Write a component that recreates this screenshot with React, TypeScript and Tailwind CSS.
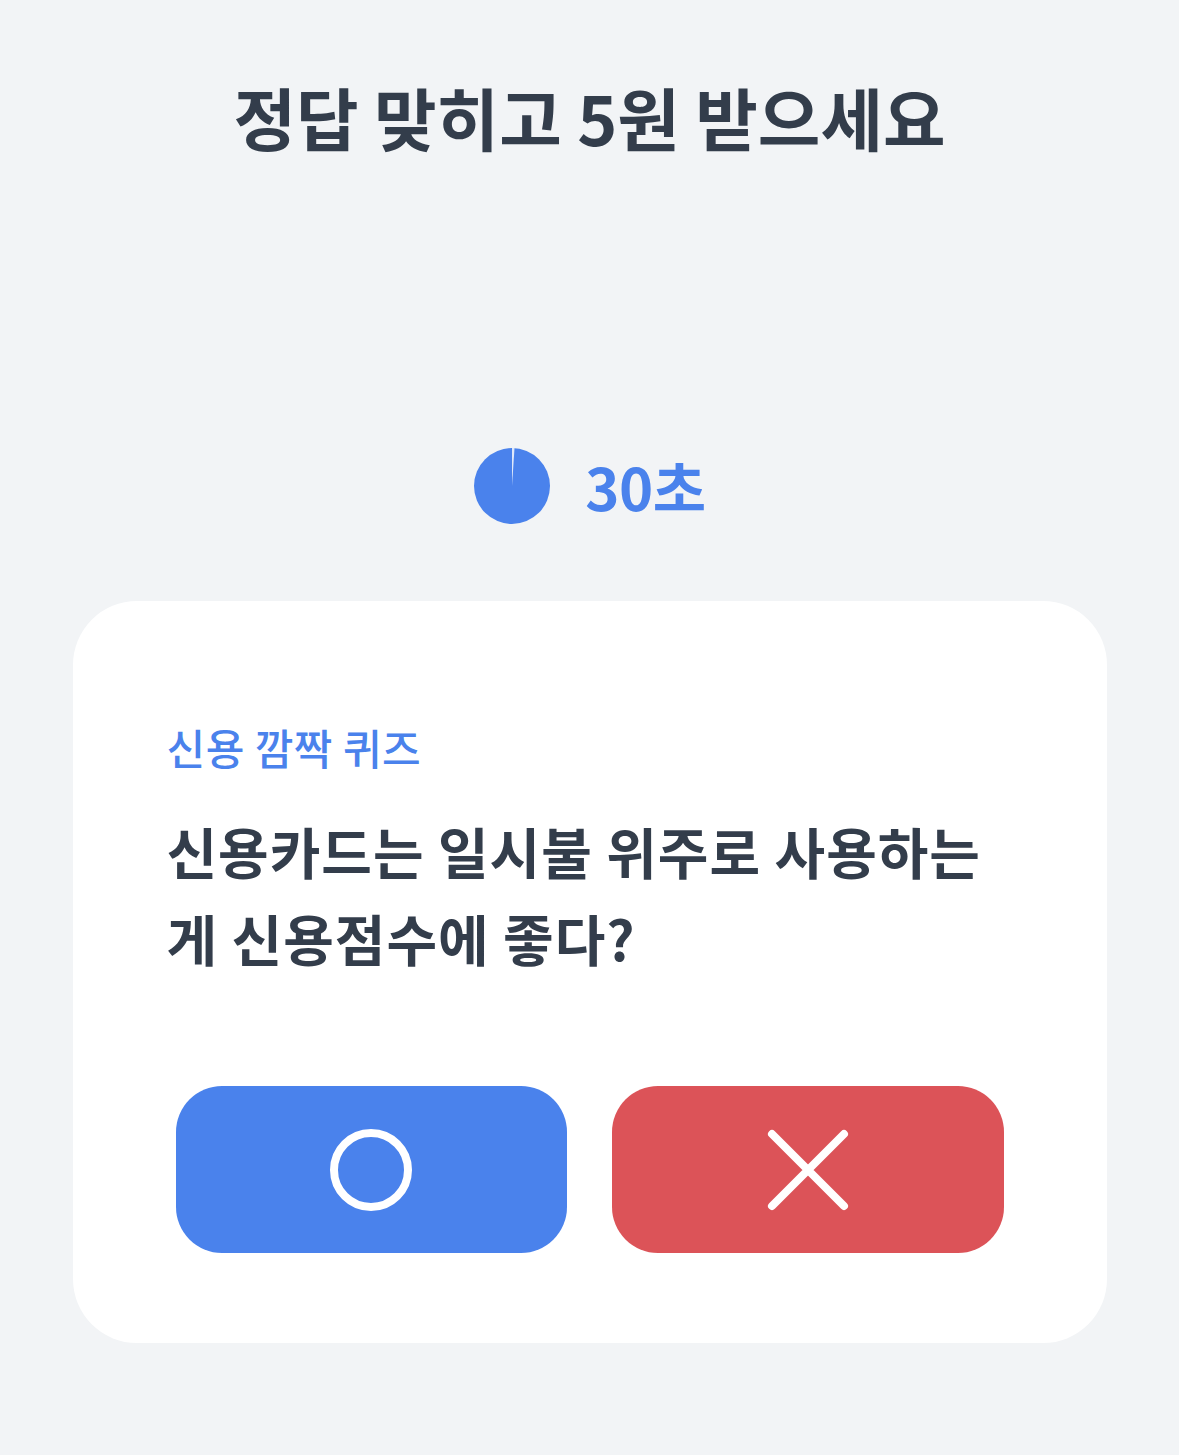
import React from "react";

function TimerPie() {
  return (
    <svg width="78" height="78" viewBox="0 0 78 78">
      <circle cx="39" cy="39" r="38" fill="#4a82ec" />
      <path d="M39 39 L39 1 L41.5 1.1 Z" fill="#dfe8fa" />
    </svg>
  );
}

export default function App() {
  return (
    <div
      className="min-h-[1455px] w-full bg-[#f2f4f6] flex flex-col items-center"
      style={{ fontFamily: '"Noto Sans CJK KR", "Noto Sans", sans-serif' }}
    >
      <h1 className="mt-[73px] text-[68px] leading-[88px] font-bold text-[#333d4b]">
        정답 맞히고 5원 받으세요
      </h1>

      <div className="mt-[286px] flex items-center gap-[34px]">
        <TimerPie />
        <span className="text-[58px] leading-[70px] font-bold text-[#4a82ec] tracking-[-0.5px]">
          30초
        </span>
      </div>

      <div className="mt-[76px] w-[1034px] h-[742px] bg-white rounded-[64px] pt-[118px] px-[94px]">
        <p className="text-[42px] leading-[56px] font-medium text-[#4a82ec] tracking-[0.5px]">
          신용 깜짝 퀴즈
        </p>
        <p className="mt-[32px] text-[55px] leading-[87px] font-bold text-[#333d4b] tracking-[1px]">
          신용카드는 일시불 위주로 사용하는
          <br />
          게 신용점수에 좋다?
        </p>
        <div className="mt-[105px] px-[9px] flex gap-[45px]">
          <button className="flex-1 h-[167px] rounded-[46px] bg-[#4a82ec] flex items-center justify-center">
            <svg width="86" height="86" viewBox="0 0 86 86">
              <circle cx="43" cy="43" r="37" fill="none" stroke="#fff" strokeWidth="8" />
            </svg>
          </button>
          <button className="flex-1 h-[167px] rounded-[46px] bg-[#dc5358] flex items-center justify-center">
            <svg width="84" height="84" viewBox="0 0 84 84">
              <path
                d="M6 6 L78 78 M78 6 L6 78"
                stroke="#fff"
                strokeWidth="8"
                strokeLinecap="round"
              />
            </svg>
          </button>
        </div>
      </div>
    </div>
  );
}
